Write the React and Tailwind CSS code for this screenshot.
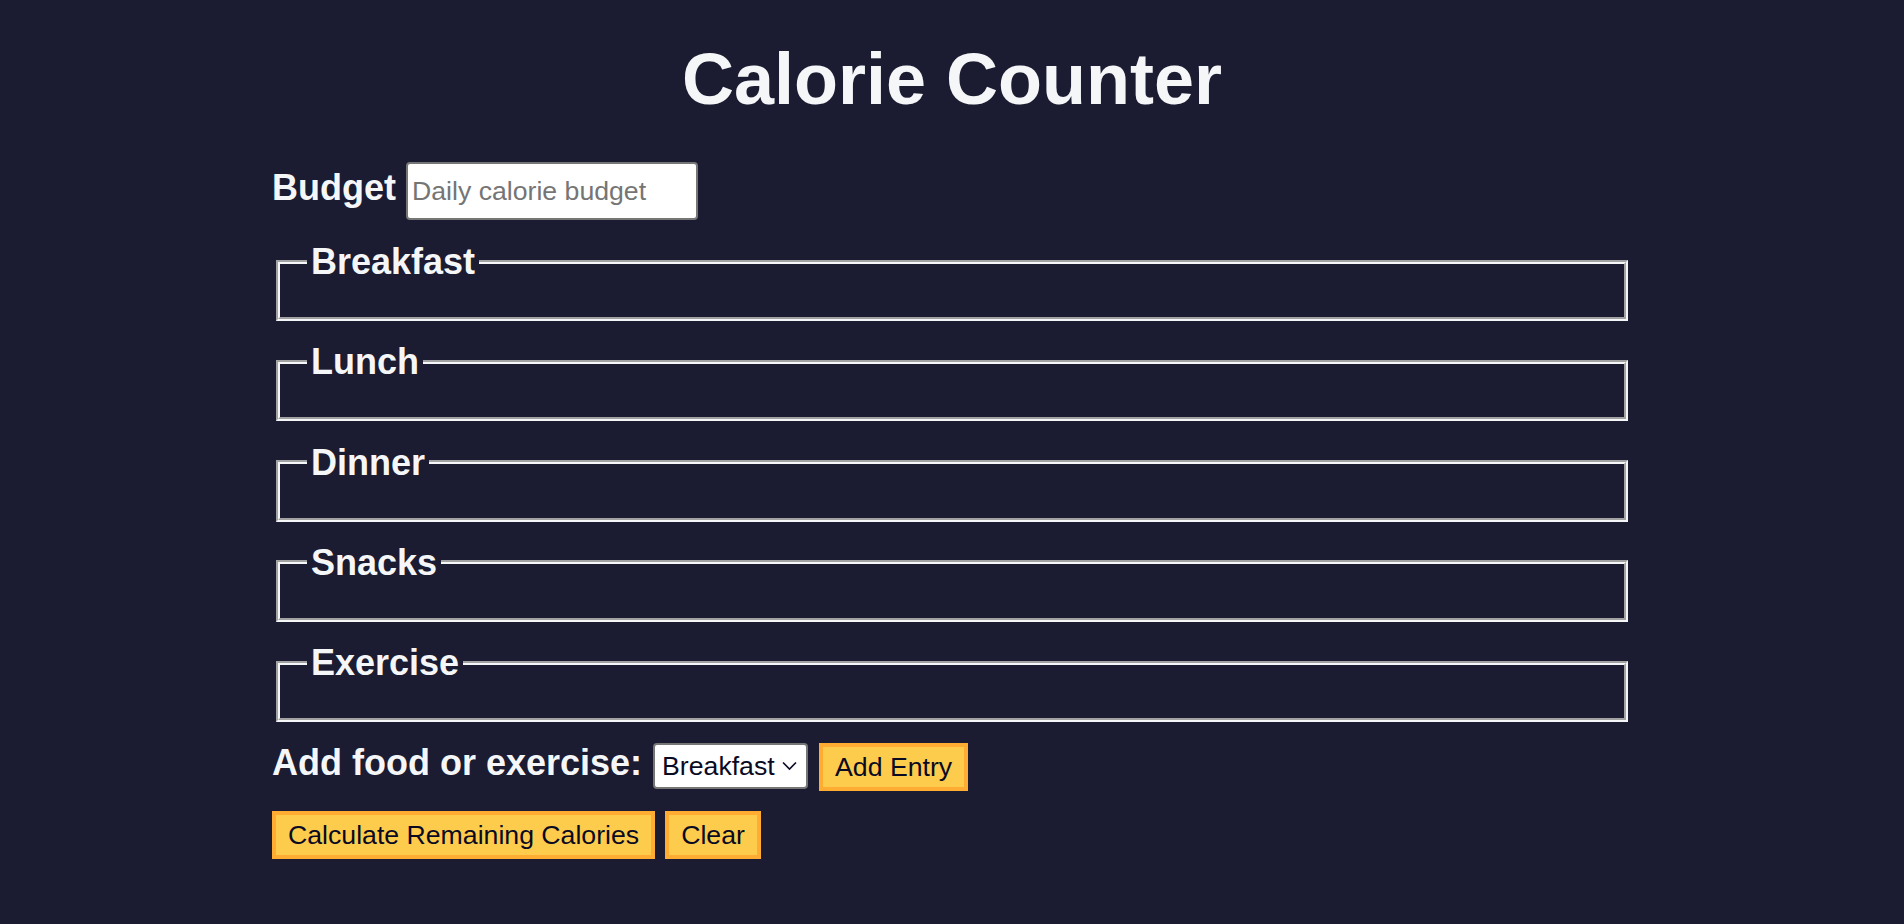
import React from "react";

const FONT = { fontFamily: '"Liberation Sans", Arial, Helvetica, sans-serif' };

function Group({ title }) {
  return (
    <fieldset className="mx-[4px] border-4 [border-style:groove] border-[#f5f6f7] px-[27px] pt-[12px] pb-[23px]">
      <legend className="px-[4px] text-[36px] font-bold leading-[41px] text-[#f5f6f7]">
        {title}
      </legend>
    </fieldset>
  );
}

export default function App() {
  return (
    <div
      className="min-h-[924px] w-full bg-[#1b1b32] text-[#f5f6f7]"
      style={FONT}
    >
      <h1 className="pt-[38px] text-center text-[72px] font-bold leading-[82px] text-[#f5f6f7]">
        Calorie Counter
      </h1>
      <div className="mx-auto w-[1360px]">
        <div className="mt-[42px] flex items-baseline gap-[10px]">
          <label className="text-[36px] font-bold leading-[41px]">Budget</label>
          <input
            type="number"
            placeholder="Daily calorie budget"
            className="h-[58px] w-[292px] rounded-[4px] border-2 border-[#767676] bg-white px-[4px] text-[26.67px] leading-[31px] text-[#0a0a23] placeholder:text-[#757575]"
          />
        </div>
        <div className="mt-[21px] flex flex-col gap-[20.25px]">
          <Group title="Breakfast" />
          <Group title="Lunch" />
          <Group title="Dinner" />
          <Group title="Snacks" />
          <Group title="Exercise" />
        </div>
        <div className="mt-[21px] flex items-start">
          <label className="-mt-[1px] mr-[11px] text-[36px] font-bold leading-[41px]">
            Add food or exercise:
          </label>
          <div className="relative flex h-[46px] w-[155px] items-center rounded-[4px] border-2 border-[#767676] bg-white pl-[7px] text-[26.67px] leading-[31px] text-[#0a0a23]">
            <span>Breakfast</span>
            <svg
              className="absolute right-[9px] top-[16px]"
              width="15"
              height="10"
              viewBox="0 0 15 10"
              fill="none"
            >
              <path d="M1 1.5 L7.5 8 L14 1.5" stroke="#0a0a23" strokeWidth="1.6" />
            </svg>
          </div>
          <button className="ml-[11px] h-[48px] border-4 border-[#feac32] bg-[#fecc4c] px-[12px] text-[26.67px] leading-[31px] text-[#0a0a23]">
            Add Entry
          </button>
        </div>
        <div className="mt-[20px] flex gap-[10px]">
          <button className="h-[48px] border-4 border-[#feac32] bg-[#fecc4c] px-[12px] text-[26.67px] leading-[31px] text-[#0a0a23]">
            Calculate Remaining Calories
          </button>
          <button className="h-[48px] border-4 border-[#feac32] bg-[#fecc4c] px-[12px] text-[26.67px] leading-[31px] text-[#0a0a23]">
            Clear
          </button>
        </div>
      </div>
    </div>
  );
}
